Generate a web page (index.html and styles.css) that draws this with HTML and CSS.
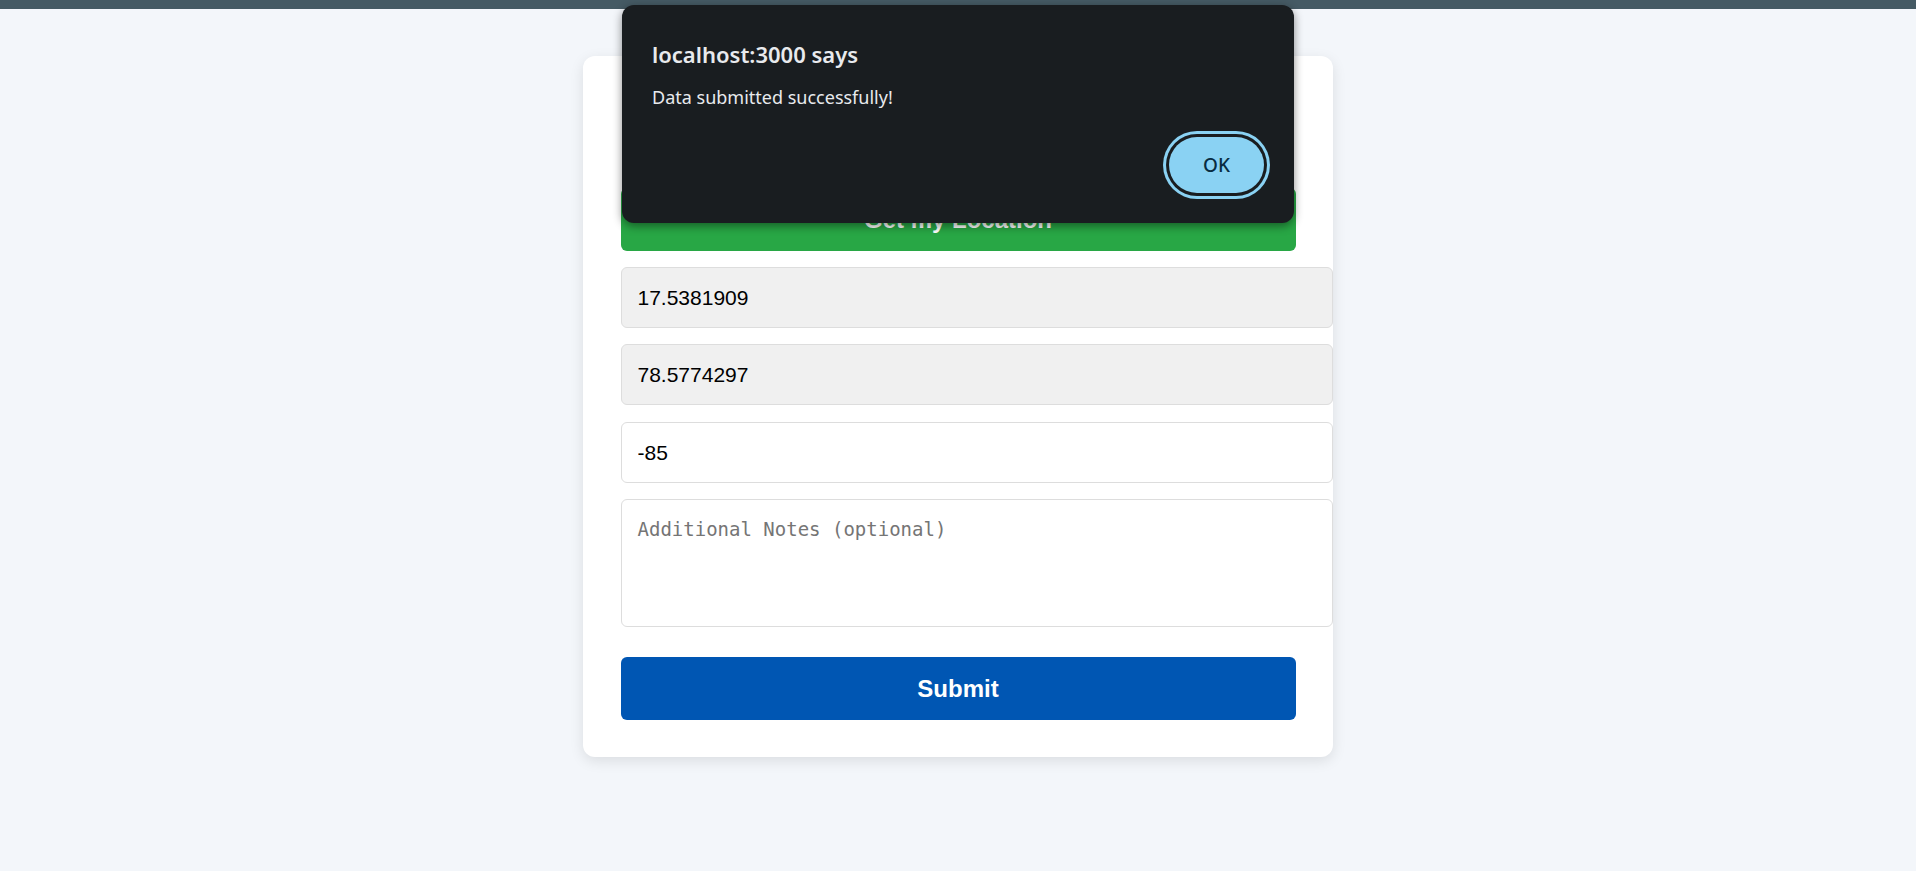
FILE: index.html
```html
<!DOCTYPE html>
<html lang="en">
<head>
<meta charset="utf-8">
<title>Location Form</title>
<link rel="stylesheet" href="styles.css">
</head>
<body>
<div class="topbar"></div>
<main class="page">
  <form class="card">
    <h2 class="card-title">Share Your Location</h2>
    <button type="button" class="btn btn-green">Get my Location</button>
    <input class="field field-readonly" type="text" value="17.5381909" readonly>
    <input class="field field-readonly" type="text" value="78.5774297" readonly>
    <input class="field field-rssi" type="text" value="-85">
    <textarea class="field field-notes" placeholder="Additional Notes (optional)"></textarea>
    <button type="button" class="btn btn-blue">Submit</button>
  </form>
</main>
<div class="dialog" role="alertdialog">
  <div class="dialog-title">localhost:3000 says</div>
  <div class="dialog-msg">Data submitted successfully!</div>
  <div class="dialog-actions">
    <button type="button" class="dialog-ok">OK</button>
  </div>
</div>
</body>
</html>
```
FILE: styles.css
```css
* { box-sizing: border-box; }

html, body {
  margin: 0;
  padding: 0;
}

body {
  background: #f3f6fa;
  font-family: "Liberation Sans", Arial, sans-serif;
  min-height: 871px;
}

.topbar {
  height: 9px;
  background: #455a64;
}

.page {
  display: flex;
  justify-content: center;
  padding-top: 47px;
}

.card {
  width: 750px;
  background: #ffffff;
  border-radius: 12px;
  box-shadow: 0 4px 14px rgba(0, 0, 0, 0.1);
  padding: 38px 37.5px 37px;
  display: flex;
  flex-direction: column;
  gap: 16px;
}

.card-title {
  margin: 0;
  height: 78px;
  line-height: 78px;
  text-align: center;
  font-size: 28px;
  color: #333;
}

.btn {
  height: 63px;
  border: none;
  border-radius: 6px;
  color: #ffffff;
  font-family: "Liberation Sans", Arial, sans-serif;
  font-weight: bold;
  font-size: 24px;
  width: 100%;
  padding: 0;
}

.btn-green { background: #28a745; }

.btn-blue {
  background: #0056b3;
  margin-top: 14px;
}

.field {
  box-sizing: content-box;
  width: 100%;
  align-self: flex-start;
  border: 1px solid #dddddd;
  border-radius: 6px;
  padding: 18px 19px 18px 16px;
  font-family: "Liberation Sans", Arial, sans-serif;
  font-size: 21px;
  line-height: 23px;
  height: 23px;
  color: #000000;
  background: #ffffff;
  margin: 0;
  outline: none;
}

.field-readonly { background: #f0f0f0; }

.field-rssi { margin-top: 1px; }

.field-notes {
  height: 90px;
  resize: none;
  font-family: "DejaVu Sans Mono", "Liberation Mono", monospace;
  font-size: 19px;
  line-height: 22px;
  display: block;
  margin-top: 0;
}

.field-notes::placeholder { color: #757575; }

.dialog {
  position: absolute;
  top: 5px;
  left: 50%;
  transform: translateX(-50%);
  width: 672px;
  background: #191d20;
  border-radius: 12px;
  box-shadow: 0 3px 10px rgba(0, 0, 0, 0.45);
  padding: 34px 30px 30px;
  font-family: "Noto Sans", "Open Sans", sans-serif;
  color: #e8eaed;
}

.dialog-title {
  font-size: 22px;
  font-weight: 600;
  line-height: 30px;
}

.dialog-msg {
  margin-top: 16px;
  font-size: 18px;
  line-height: 25px;
}

.dialog-actions {
  display: flex;
  justify-content: flex-end;
  margin-top: 27px;
}

.dialog-ok {
  width: 95px;
  height: 56px;
  border: none;
  border-radius: 28px;
  background: #8ad2f3;
  color: #082c42;
  font-family: "Noto Sans", "Open Sans", sans-serif;
  font-size: 19px;
  font-weight: 500;
  box-shadow: 0 0 0 3px #191d20, 0 0 0 6px #8ad2f3;
  padding: 0;
}
```
